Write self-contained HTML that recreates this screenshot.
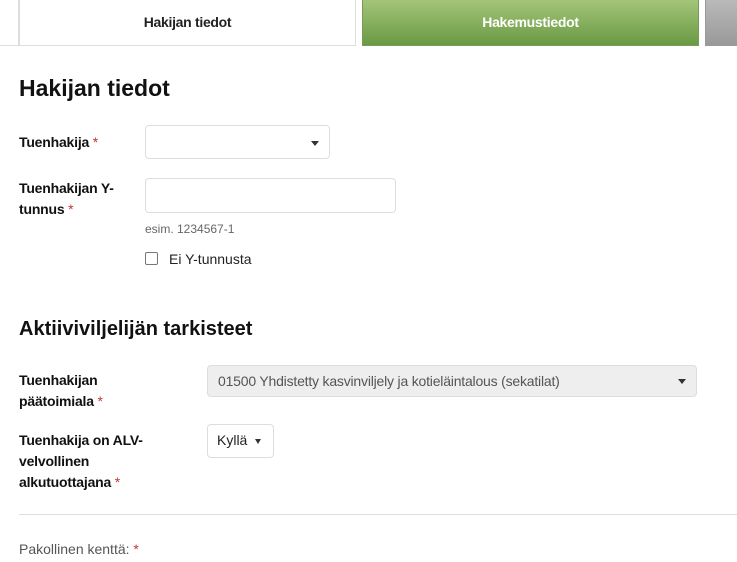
<!DOCTYPE html>
<html><head><meta charset="utf-8"><style>
body{margin:0;width:737px;height:562px;overflow:hidden;background:#fff;font-family:"Liberation Sans",sans-serif;color:#222;position:relative}
.a{position:absolute}
.tab{position:absolute;top:-2px;height:48px;border:1px solid #ddd;border-top:none;box-sizing:border-box;font-size:14px;font-weight:bold;text-align:center;line-height:48px;letter-spacing:-0.3px}
.lbl{position:absolute;left:19px;font-size:14px;font-weight:bold;line-height:21px;color:#111;letter-spacing:-0.2px}
.r{color:#c0392b;font-weight:normal}
.inp{position:absolute;border:1px solid #ddd;border-radius:4px;background:#fff;box-sizing:border-box}
.car{position:absolute;width:0;height:0;border-left:4px solid transparent;border-right:4px solid transparent;border-top:5px solid #333}
</style></head><body>
<div class="tab" style="left:-10px;width:29px"></div>
<div class="tab" style="left:19px;width:337px">Hakijan tiedot</div>
<div class="tab" style="left:362px;width:337px;background:linear-gradient(#a6c67a,#6a9a44);color:#fff;border-color:#7a9a5a">Hakemustiedot</div>
<div class="tab" style="left:705px;width:40px;background:linear-gradient(#bbb,#999);border-color:#999"></div>
<div class="a" style="left:19px;top:75px;font-size:23px;font-weight:bold;color:#111">Hakijan tiedot</div>
<div class="lbl" style="top:132px">Tuenhakija <span class="r">*</span></div>
<div class="inp" style="left:145px;top:125px;width:185px;height:34px"><div class="car" style="left:165px;top:15px"></div></div>
<div class="lbl" style="top:178px">Tuenhakijan Y-<br>tunnus <span class="r">*</span></div>
<div class="inp" style="left:145px;top:178px;width:251px;height:35px"></div>
<div class="a" style="left:145px;top:222px;font-size:12px;color:#666">esim. 1234567-1</div>
<div class="a" style="left:145px;top:252px;width:13px;height:13px;border:1px solid #777;border-radius:2px;box-sizing:border-box"></div>
<div class="a" style="left:169px;top:251px;font-size:14px">Ei Y-tunnusta</div>
<div class="a" style="left:19px;top:318px;font-size:20px;font-weight:bold;color:#111">Aktiiviviljelijän tarkisteet</div>
<div class="lbl" style="top:370px">Tuenhakijan<br>päätoimiala <span class="r">*</span></div>
<div class="inp" style="left:207px;top:365px;width:490px;height:32px;background:#eee;font-size:14px;color:#555;line-height:30px;padding-left:10px;letter-spacing:-0.2px">01500 Yhdistetty kasvinviljely ja kotieläintalous (sekatilat)<div class="car" style="left:470px;top:13px"></div></div>
<div class="lbl" style="top:430px">Tuenhakija on ALV-<br>velvollinen<br>alkutuottajana <span class="r">*</span></div>
<div class="inp" style="left:207px;top:424px;width:67px;height:34px;font-size:14px;line-height:30px;padding-left:9px">Kyllä<div class="car" style="left:47px;top:14px;border-left-width:3.5px;border-right-width:3.5px"></div></div>
<div class="a" style="left:19px;top:514px;width:718px;height:1px;background:#ddd"></div>
<div class="a" style="left:19px;top:541px;font-size:14px;color:#555">Pakollinen kenttä: <span class="r">*</span></div>
</body></html>
